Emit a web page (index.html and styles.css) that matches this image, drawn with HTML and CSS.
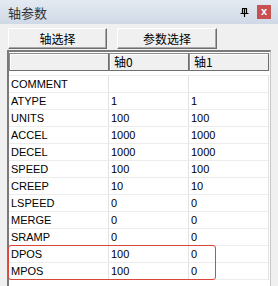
FILE: index.html
```html
<!DOCTYPE html>
<html lang="zh">
<head>
  <meta charset="UTF-8">
  <title>轴参数</title>
  <link rel="stylesheet" href="styles.css">
</head>
<body>
  <div class="panel">
    <div class="titlebar">
      <span class="title">轴参数</span>
      <span class="pin">
        <svg width="9" height="9" viewBox="0 0 9 9">
          <path d="M2 0.5h5M2.5 0.5v5M6.5 0.5v5M4.5 0.5v5M0.5 5.5h8M4.5 5.5v3.5" stroke="#000" stroke-width="1.2" fill="none"/>
        </svg>
      </span>
      <span class="close">x</span>
    </div>

    <div class="toolbar">
      <button class="tool-btn axis">轴选择</button>
      <button class="tool-btn param">参数选择</button>
    </div>

    <div class="grid">
      <div class="row head">
        <div class="hcell"></div>
        <div class="hcell">轴0</div>
        <div class="hcell">轴1</div>
      </div>
      <div class="rows">
        <div class="row"><div>COMMENT</div><div></div><div></div></div>
        <div class="row"><div>ATYPE</div><div>1</div><div>1</div></div>
        <div class="row"><div>UNITS</div><div>100</div><div>100</div></div>
        <div class="row"><div>ACCEL</div><div>1000</div><div>1000</div></div>
        <div class="row"><div>DECEL</div><div>1000</div><div>1000</div></div>
        <div class="row"><div>SPEED</div><div>100</div><div>100</div></div>
        <div class="row"><div>CREEP</div><div>10</div><div>10</div></div>
        <div class="row"><div>LSPEED</div><div>0</div><div>0</div></div>
        <div class="row"><div>MERGE</div><div>0</div><div>0</div></div>
        <div class="row"><div>SRAMP</div><div>0</div><div>0</div></div>
        <div class="row"><div>DPOS</div><div>100</div><div>0</div></div>
        <div class="row"><div>MPOS</div><div>100</div><div>0</div></div>
      </div>
      <div class="mark"></div>
    </div>
  </div>
</body>
</html>
```

FILE: styles.css
```css
*, *::before, *::after {
  box-sizing: border-box;
}
body {
  margin: 0;
  padding: 0;
  background: #f0f0f0;
  font-family: "Liberation Sans", "Noto Sans CJK SC", sans-serif;
  color: #000;
}
.panel {
  width: 278px;
  height: 286px;
  overflow: hidden;
  background: #f0f0f0;
}

/* タイトルバー */
.titlebar {
  height: 24px;
  display: flex;
  align-items: center;
  padding: 0 7px 0 8px;
  background: linear-gradient(#e4eaf2, #cfd9e6);
}
.title {
  flex: 1;
  font-family: "Noto Sans CJK SC", sans-serif;
  font-size: 13px;
  color: #333;
  line-height: 1;
}
.pin {
  display: flex;
  margin-right: 8px;
}
.close {
  width: 14px;
  height: 14px;
  background: #c75050;
  color: #fff;
  font-size: 11px;
  font-weight: bold;
  line-height: 12px;
  text-align: center;
}

/* ボタン */
.toolbar {
  display: flex;
  align-items: flex-start;
  padding: 4px 0 0 8px;
  height: 26px;
}
.tool-btn {
  height: 21px;
  margin: 0;
  padding: 0;
  background: #f0f0f0;
  border: 1px solid;
  border-color: #fff #6e6e6e #6e6e6e #fff;
  box-shadow: inset -1px -1px 0 #a8a8a8;
  font-family: "Noto Sans CJK SC", sans-serif;
  font-size: 12px;
  color: #000;
  line-height: 1;
}
.tool-btn.axis {
  width: 99px;
}
.tool-btn.param {
  width: 100px;
  margin-left: 10px;
}

/* テーブル */
.grid {
  position: relative;
  margin-left: 7px;
  width: 264px;
  height: 236px;
  border-left: 2px solid #7a7a7a;
  border-top: 2px solid #7a7a7a;
  border-right: 1px solid #c8c8c8;
  background: #fff;
  font-size: 11px;
}
.row {
  display: grid;
  grid-template-columns: 100px 80px 80px;
  height: 17px;
  border-bottom: 1px solid #ececec;
}
.row > div {
  padding-left: 2px;
  line-height: 16px;
  border-right: 1px solid #e2e2e2;
  white-space: nowrap;
}
.row.head {
  height: 18px;
  border-bottom: none;
  background: #f0f0f0;
  margin-top: 1px;
}
.row.head .hcell {
  border: 1px solid #8c8c8c;
  border-right-color: #6e6e6e;
  border-bottom-color: #6e6e6e;
  box-shadow: inset 1px 1px 0 #fff;
  padding-left: 4px;
  line-height: 15px;
  font-family: "Noto Sans CJK SC", sans-serif;
  font-size: 12px;
}
.rows {
  margin-top: 4px;
  border-top: 1px solid #ececec;
}

/* 赤枠 */
.mark {
  position: absolute;
  left: -1px;
  top: 193px;
  width: 208px;
  height: 35px;
  border: 1.5px solid #d9473a;
  border-radius: 3px;
}
```
